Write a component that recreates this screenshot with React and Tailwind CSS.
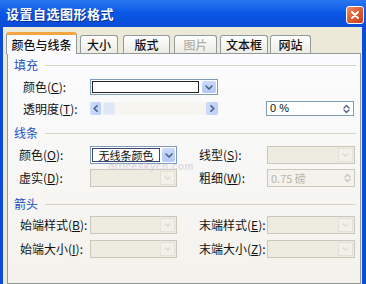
import React from "react";

const Chevron = ({ color = "#4d6185", w = 8, h = 5, sw = 1.6 }) => (
  <svg width={w} height={h} viewBox="0 0 8 5" fill="none">
    <path d="M1 1 L4 4 L7 1" stroke={color} strokeWidth={sw} strokeLinecap="round" strokeLinejoin="round" />
  </svg>
);

const Arrow = ({ dir, color = "#4d6185" }) => (
  <svg width="5" height="7" viewBox="0 0 5 7" fill="none">
    <path d={dir === "l" ? "M4 0.8 L1.2 3.5 L4 6.2" : "M1 0.8 L3.8 3.5 L1 6.2"} stroke={color} strokeWidth="1.6" strokeLinecap="round" strokeLinejoin="round" />
  </svg>
);

const SpinArrows = ({ color }) => (
  <svg width="7" height="10" viewBox="0 0 7 10" fill="none">
    <path d="M1 4 L3.5 1.5 L6 4" stroke={color} strokeWidth="1.3" strokeLinecap="round" strokeLinejoin="round" />
    <path d="M1 6 L3.5 8.5 L6 6" stroke={color} strokeWidth="1.3" strokeLinecap="round" strokeLinejoin="round" />
  </svg>
);

const DisabledCombo = ({ className = "" }) => (
  <div className={`h-[18px] border border-[#cac8bb] bg-[#eeebe1] flex justify-end p-px ${className}`}>
    <div className="w-[15px] h-full border border-[#e4e2d8] bg-[#f2f0e8] flex items-center justify-center">
      <Chevron color="#c7c5b8" w={7} h={4} sw={1.2} />
    </div>
  </div>
);

const Section = ({ label, className = "" }) => (
  <div className={`flex items-center h-[12px] pl-[6px] ${className}`}>
    <span className="text-[12px] leading-[12px] text-[#1d4fc4]">{label}</span>
    <div className="flex-1 h-px bg-[#d5d3c6] ml-[7px] mr-[4px] mt-[1px]" />
  </div>
);

const Label = ({ children, className = "" }) => (
  <span className={`text-[12px] leading-[12px] text-[#111] whitespace-nowrap ${className}`}>{children}</span>
);

const Tab = ({ label, active, disabled, className = "" }) => {
  if (active) {
    return (
      <div
        className={`relative top-px z-10 h-[22px] border border-[#919b9c] border-b-0 border-t-[3px] border-t-[#f2a540] rounded-t-[3px] bg-[#fcfcfe] flex items-center justify-center text-[12px] text-[#111] font-medium ${className}`}
      >
        {label}
      </div>
    );
  }
  return (
    <div
      className={`h-[18px] border border-[#919b9c] border-b-0 rounded-t-[3px] bg-gradient-to-b from-[#ffffff] to-[#ecebe5] flex items-center justify-center text-[12px] font-medium ${disabled ? "text-[#b4b1a4]" : "text-[#111]"} ${className}`}
    >
      {label}
    </div>
  );
};

export default function App() {
  return (
    <div className="w-[366px] h-[284px] overflow-hidden bg-[#ece9d8] flex flex-col relative [font-family:'Noto_Sans_CJK_SC','Noto_Sans',sans-serif]">
      {/* Title bar */}
      <div className="h-[27px] shrink-0 bg-gradient-to-b from-[#2a78f0] via-[#0a56e6] to-[#0a4cd6] flex items-center justify-between pl-[6px] pr-[2px]">
        <span className="text-white font-bold text-[13px] leading-[13px] tracking-[0.5px] [text-shadow:1px_1px_0_#0b2f8f]">
          设置自选图形格式
        </span>
        <div className="w-[18px] h-[18px] rounded-[3px] border border-white bg-gradient-to-br from-[#f08a6a] via-[#e05a30] to-[#c8401c] flex items-center justify-center mt-[2px]">
          <svg width="10" height="10" viewBox="0 0 10 10">
            <path d="M2 2 L8 8 M8 2 L2 8" stroke="white" strokeWidth="2" strokeLinecap="round" />
          </svg>
        </div>
      </div>

      {/* Body */}
      <div className="flex-1 flex flex-col border-l-[3px] border-r-[4px] border-l-[#0b4bd8] border-r-[#0b4bd8] pt-[5px]">
        {/* Tabs */}
        <div className="flex items-end h-[21px] shrink-0">
          <Tab label="颜色与线条" active className="ml-[3px] w-[71px]" />
          <Tab label="大小" className="ml-[3px] w-[38px]" />
          <Tab label="版式" className="ml-[5px] w-[47px]" />
          <Tab label="图片" disabled className="ml-[4px] w-[43px]" />
          <Tab label="文本框" className="ml-[3px] w-[48px]" />
          <Tab label="网站" className="ml-[2px] w-[41px]" />
        </div>

        {/* Panel */}
        <div className="flex-1 ml-[4px] mr-[1px] border border-[#919b9c] bg-gradient-to-b from-[#fcfcfe] to-[#f3f2ec] flex flex-col">
          <Section label="填充" className="mt-[5px]" />

          {/* 颜色 C */}
          <div className="flex items-center mt-[8px] h-[16px] pl-[15px]">
            <Label className="w-[67px]">
              颜色(<u>C</u>):
            </Label>
            <div className="w-[128px] h-[16px] border border-[#7f9db9] bg-white flex items-stretch p-px">
              <div className="flex-1 border border-[#222] mr-[3px]" />
              <div className="w-[14px] bg-gradient-to-b from-[#c9dafc] to-[#b3c8f5] rounded-[2px] flex items-center justify-center">
                <Chevron />
              </div>
            </div>
          </div>

          {/* 透明度 T */}
          <div className="flex items-center mt-[6px] h-[15px] pl-[15px]">
            <Label className="w-[67px]">
              透明度(<u>T</u>):
            </Label>
            <div className="w-[128px] h-[13px] bg-[#f6f5f0] flex items-stretch">
              <div className="w-[11px] bg-gradient-to-r from-[#cddcfb] to-[#bccff8] rounded-[2px] flex items-center justify-center">
                <Arrow dir="l" />
              </div>
              <div className="w-[12px] ml-[2px] bg-[#dfe6f6] rounded-[2px] border border-[#e9eefa]" />
              <div className="flex-1" />
              <div className="w-[12px] bg-gradient-to-r from-[#cddcfb] to-[#bccff8] rounded-[2px] flex items-center justify-center">
                <Arrow dir="r" />
              </div>
            </div>
            <div className="ml-[48px] w-[88px] h-[15px] border border-[#7f9db9] bg-white flex items-center justify-between pl-[3px] pr-[3px]">
              <span className="text-[11px] leading-[11px] text-[#111] [font-family:'Liberation_Sans',sans-serif]">0 %</span>
              <SpinArrows color="#4d6185" />
            </div>
          </div>

          <Section label="线条" className="mt-[11px]" />

          {/* 颜色 O / 线型 S */}
          <div className="flex items-center mt-[7px] h-[18px] pl-[11px]">
            <Label className="w-[71px]">
              颜色(<u>O</u>):
            </Label>
            <div className="w-[87px] h-[18px] border border-[#7f9db9] bg-white flex items-stretch p-px">
              <div className="flex-1 border border-[#3a4a6e] flex items-center justify-center mr-[2px]">
                <span className="text-[11px] leading-[11px] text-[#111]">无线条颜色</span>
              </div>
              <div className="w-[13px] bg-gradient-to-b from-[#c9dafc] to-[#b3c8f5] rounded-[2px] flex items-center justify-center">
                <Chevron />
              </div>
            </div>
            <Label className="ml-[22px] w-[68px]">
              线型(<u>S</u>):
            </Label>
            <DisabledCombo className="w-[88px]" />
          </div>

          {/* 虚实 D / 粗细 W */}
          <div className="flex items-center mt-[5px] h-[18px] pl-[11px]">
            <Label className="w-[71px]">
              虚实(<u>D</u>):
            </Label>
            <DisabledCombo className="w-[87px]" />
            <Label className="ml-[22px] w-[68px]">
              粗细(<u>W</u>):
            </Label>
            <div className="w-[88px] h-[18px] border border-[#cac8bb] bg-[#f4f2ec] flex items-center justify-between pl-[3px] pr-[3px]">
              <span className="text-[11px] leading-[11px] text-[#b9b6a8]">0.75 磅</span>
              <SpinArrows color="#c7c5b8" />
            </div>
          </div>

          <Section label="箭头" className="mt-[11px]" />

          {/* 始端样式 B / 末端样式 E */}
          <div className="flex items-center mt-[6px] h-[18px] pl-[12px]">
            <Label className="w-[70px]">
              始端样式(<u>B</u>):
            </Label>
            <DisabledCombo className="w-[87px]" />
            <Label className="ml-[22px] w-[68px]">
              末端样式(<u>E</u>):
            </Label>
            <DisabledCombo className="w-[88px]" />
          </div>

          {/* 始端大小 I / 末端大小 Z */}
          <div className="flex items-center mt-[6px] h-[18px] pl-[12px]">
            <Label className="w-[70px]">
              始端大小(<u>I</u>):
            </Label>
            <DisabledCombo className="w-[87px]" />
            <Label className="ml-[22px] w-[68px]">
              末端大小(<u>Z</u>):
            </Label>
            <DisabledCombo className="w-[88px]" />
          </div>
        </div>
      </div>

      {/* Watermark */}
      <div className="absolute left-[108px] top-[162px] text-[10px] leading-[9px] h-[9px] font-bold text-[#cfcad8] opacity-60 pointer-events-none [font-family:'Liberation_Sans',sans-serif] tracking-[0.5px]">
        officeskycn.com
      </div>
    </div>
  );
}
